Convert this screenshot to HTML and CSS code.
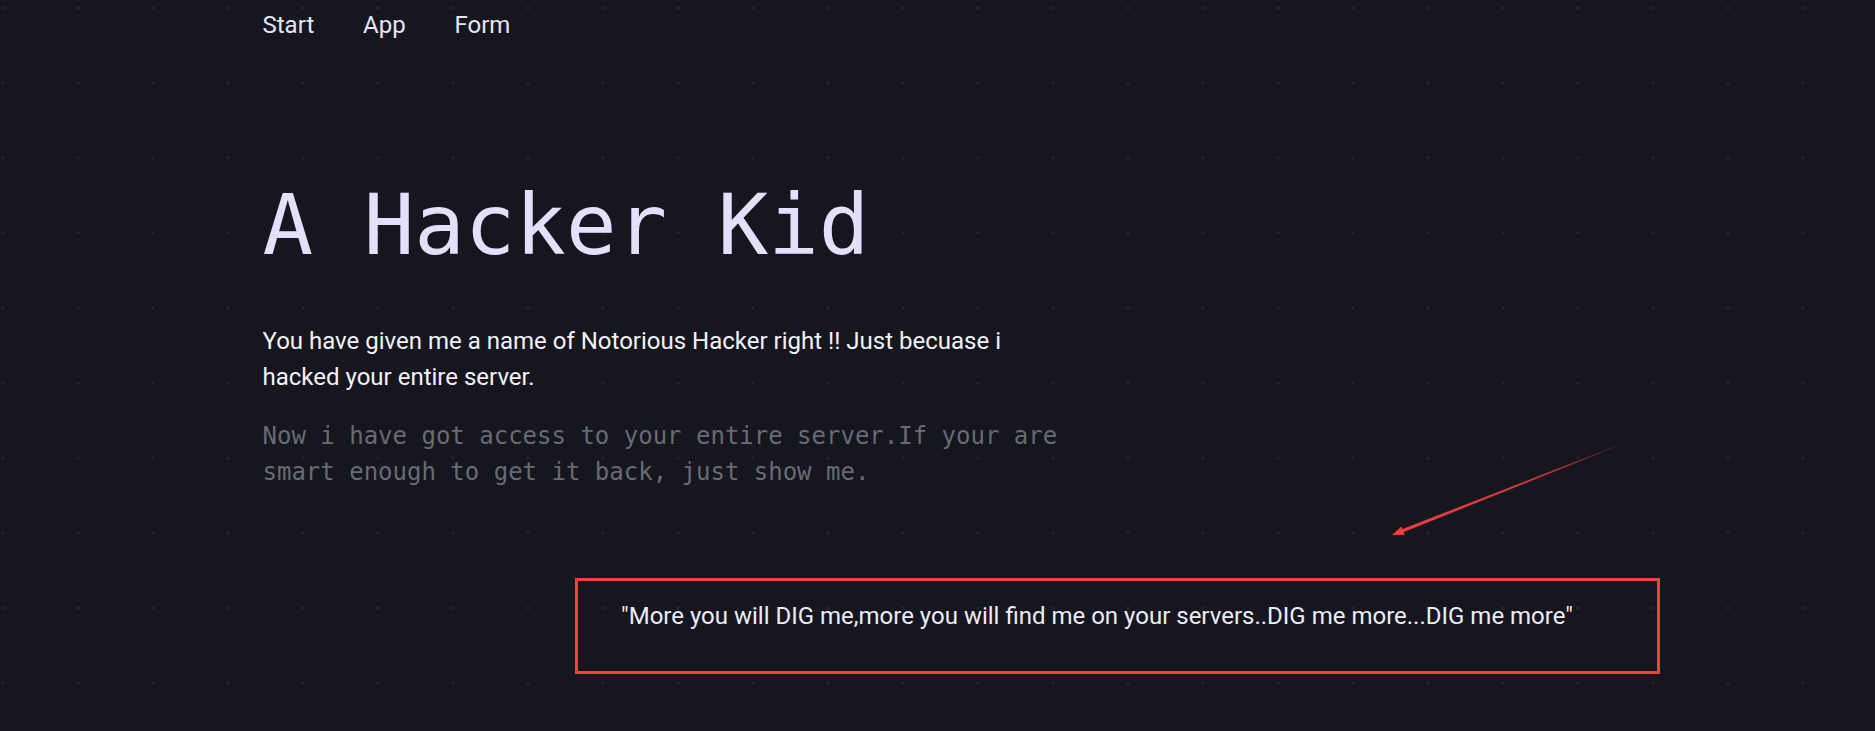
FILE: index.html
```html
<!DOCTYPE html>
<html lang="en">
<head>
<meta charset="utf-8">
<title>A Hacker Kid</title>
<link rel="stylesheet" href="styles.css">
</head>
<body>
<div class="container">
  <nav class="nav">
    <a href="#">Start</a>
    <a href="#">App</a>
    <a href="#">Form</a>
  </nav>
  <main class="hero">
    <h1 class="title">A Hacker Kid</h1>
    <p class="lead">You have given me a name of Notorious Hacker right !! Just becuase i hacked your entire server.</p>
    <p class="mono">Now i have got access to your entire server.If your are smart enough to get it back, just show me.</p>
    <div class="quote-box">
      <p class="quote">"More you will DIG me,more you will find me on your servers..DIG me more...DIG me more"</p>
    </div>
  </main>
</div>
<svg class="arrow" width="250" height="110" viewBox="0 0 250 110" xmlns="http://www.w3.org/2000/svg">
  <defs>
    <linearGradient id="fade" gradientUnits="userSpaceOnUse" x1="242" y1="7" x2="16" y2="96">
      <stop offset="0" stop-color="#f23f3f" stop-opacity="0"/>
      <stop offset="0.35" stop-color="#f23f3f" stop-opacity="0.8"/>
      <stop offset="1" stop-color="#f23f3f" stop-opacity="1"/>
    </linearGradient>
  </defs>
  <polygon points="16.9,97.8 15.7,94.8 241.9,6.6 242.1,7.4" fill="url(#fade)"/>
  <polygon points="7,100 19.8,99.8 16.5,91.4" fill="#f23f3f"/>
</svg>
</body>
</html>
```

FILE: styles.css
```css
html, body {
  margin: 0;
  padding: 0;
}

body {
  position: relative;
  min-height: 731px;
  background-color: #15161e;
  background-image: radial-gradient(circle, #24252e 1.2px, transparent 1.9px);
  background-size: 75px 75px;
  background-position: -34.5px -29.5px;
  font-family: Roboto, "Liberation Sans", sans-serif;
  font-size: 24px;
  line-height: 36px;
  color: #f2f2fa;
}

.container {
  width: 1350px;
  margin: 0 auto;
}

.nav {
  display: flex;
  gap: 48.8px;
  padding-top: 7px;
}

.nav a {
  color: #e4e6f8;
  text-decoration: none;
}

.hero {
  display: flex;
  flex-direction: column;
  align-items: flex-start;
}

.title {
  margin: 131.5px 0 0;
  font-family: "DejaVu Sans Mono", monospace;
  font-size: 84px;
  line-height: 100.8px;
  font-weight: normal;
  color: #e3e0fc;
}

.lead {
  margin: 48px 0 0;
  max-width: 800px;
}

.mono {
  margin: 23px 0 0;
  max-width: 800px;
  font-family: "DejaVu Sans Mono", monospace;
  font-size: 24px;
  line-height: 36px;
  color: #696a74;
}

.quote-box {
  margin: 88px 0 0 312.5px;
  width: 1085px;
  height: 96px;
  box-sizing: border-box;
  border: 3px solid #f23f3f;
  padding: 17px 43px;
}

.quote {
  margin: 0;
  color: #ececf8;
}

.arrow {
  position: absolute;
  left: 1385px;
  top: 435px;
}
```
